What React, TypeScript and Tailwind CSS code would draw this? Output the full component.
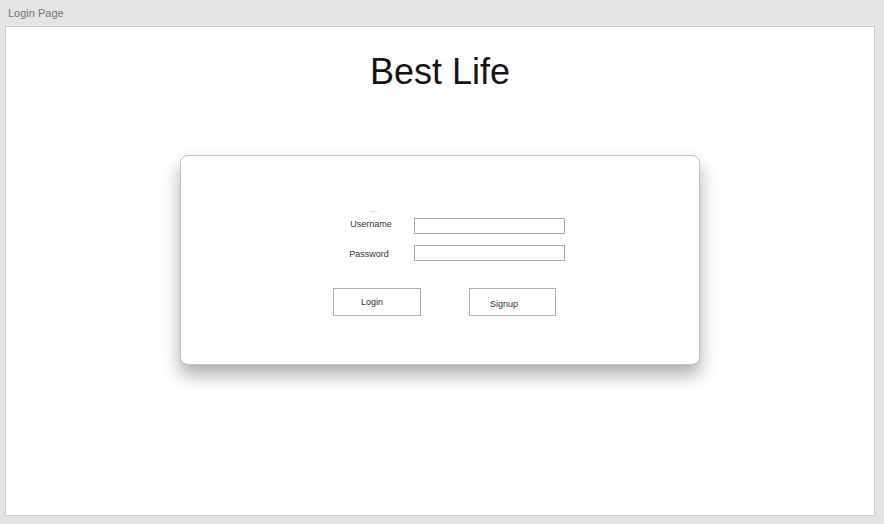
import React from "react";

export default function App() {
  return (
    <div className="w-[884px] h-[524px] bg-[#e4e4e4] font-['Liberation_Sans',Arial,sans-serif] overflow-hidden">
      {/* Page tab label */}
      <div className="h-[26px] pl-[8px] pt-[7px] text-[11px] leading-[13px] text-[#777]">Login Page</div>

      {/* Artboard */}
      <div className="ml-[5px] w-[870px] h-[490px] bg-white border border-[#cfcfcf] flex flex-col items-center">
        <h1 className="mt-[27px] text-[36px] leading-[36px] text-[#141414]">Best Life</h1>

        {/* Login card */}
        <div className="mt-[65px] w-[520px] h-[210px] bg-white border border-[#c4c4c4] rounded-[8px] shadow-[0_10px_18px_rgba(0,0,0,0.33)] flex flex-col pl-[152px]">
          <div className="mt-[55px] ml-[37px] w-[7px] h-px bg-[#dcdcdc]" />

          <div className="mt-[6px] flex items-center h-[16px]">
            <label className="w-[76px] text-center text-[9px] leading-[10px] text-[#333] -mt-[4px]">Username</label>
            <input className="ml-[5px] w-[151px] h-[16px] border border-[#a8a8a8] bg-white outline-none" />
          </div>

          <div className="mt-[11px] flex items-center h-[16px]">
            <label className="w-[72px] text-center text-[9px] leading-[10px] text-[#333] mt-[2px]">Password</label>
            <input className="ml-[9px] w-[151px] h-[16px] border border-[#a8a8a8] bg-white outline-none" />
          </div>

          <div className="mt-[27px] flex gap-[48px]">
            <button className="w-[88px] h-[28px] border border-[#b0b0b0] bg-white text-[9px] text-[#333] pr-[10px] pt-[2px]">Login</button>
            <button className="w-[87px] h-[28px] border border-[#b0b0b0] bg-white text-[9px] text-[#333] pr-[17px] pt-[6px]">Signup</button>
          </div>
        </div>
      </div>
    </div>
  );
}
